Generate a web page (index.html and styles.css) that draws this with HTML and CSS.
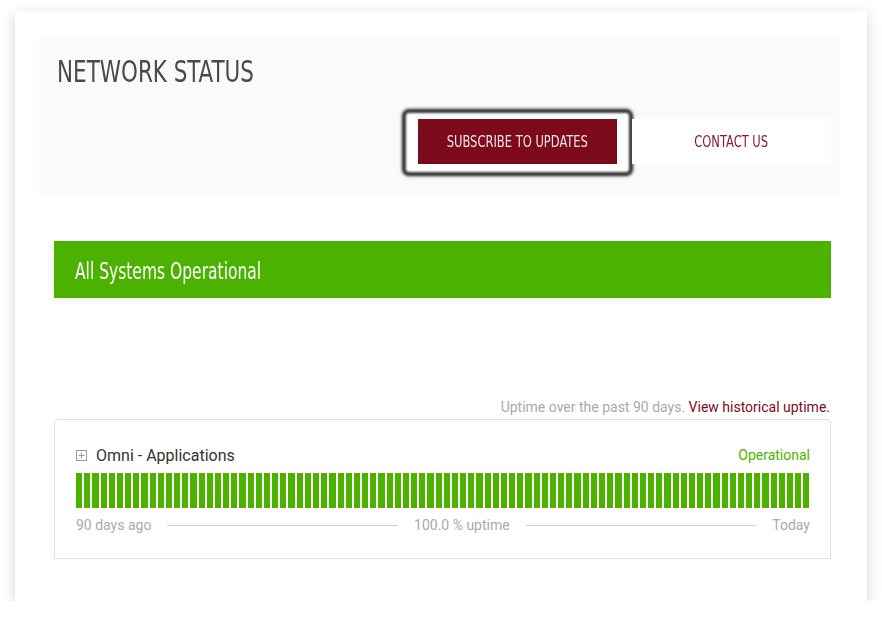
FILE: index.html
```html
<!DOCTYPE html>
<html>
<head>
<meta charset="utf-8">
<link rel="stylesheet" href="styles.css">
</head>
<body>
<div class="page">
  <header class="header">
    <h1 class="title"><span class="cond">NETWORK STATUS</span></h1>
    <div class="actions">
      <a class="btn btn-primary"><span class="cond cond-c">SUBSCRIBE TO UPDATES</span></a>
      <a class="btn btn-secondary"><span class="cond cond-c">CONTACT US</span></a>
    </div>
  </header>
  <main class="content">
    <div class="banner"><span class="cond">All Systems Operational</span></div>
    <div class="uptime-note">Uptime over the past 90 days. <a class="link">View historical uptime.</a></div>
    <div class="component">
      <div class="comp-head">
        <span class="comp-name">
          <svg class="plus" width="11" height="11" viewBox="0 0 11 11"><rect x="0.5" y="0.5" width="10" height="10" fill="none" stroke="#9a9a9a" stroke-width="1"/><path d="M5.5 2.5v6M2.5 5.5h6" stroke="#9a9a9a" stroke-width="1"/></svg>
          Omni - Applications
        </span>
        <span class="comp-status">Operational</span>
      </div>
      <div class="bars" id="bars"></div>
      <div class="legend">
        <span>90 days ago</span>
        <span class="rule"></span>
        <span>100.0 % uptime</span>
        <span class="rule"></span>
        <span>Today</span>
      </div>
    </div>
  </main>
</div>
<script>
  var b = document.getElementById('bars');
  for (var i = 0; i < 90; i++) { var d = document.createElement('span'); d.className = 'bar'; b.appendChild(d); }
</script>
</body>
</html>
```

FILE: styles.css
```css
* { box-sizing: border-box; }
html, body { margin: 0; padding: 0; background: #fff; }
body { font-family: Roboto, "Liberation Sans", Arial, sans-serif; }

.page {
  margin: 11px 0 0 15px;
  width: 852px;
  height: 590px;
  background: #fff;
  box-shadow: 0 4px 14px rgba(0,0,0,0.17);
  padding: 24px 0 0 24px;
  overflow: hidden;
}

.cond {
  display: inline-block;
  font-family: "DejaVu Sans Condensed", "DejaVu Sans", sans-serif;
  font-stretch: condensed;
  transform-origin: left center;
  white-space: nowrap;
}
.cond-c { transform-origin: center center; }

.header {
  width: 801px;
  height: 160px;
  background: #fafafa;
  padding: 18px 9px 0 18px;
  isolation: isolate;
}
.title {
  margin: 0;
  font-weight: 400;
  font-size: 31px;
  line-height: 36px;
  color: #4a4a4a;
}
.title .cond { transform: scaleX(0.77); }

.actions {
  display: flex;
  justify-content: flex-end;
  gap: 15px;
  margin-top: 29px;
}
.btn {
  display: flex;
  align-items: center;
  justify-content: center;
  width: 199px;
  height: 45px;
  font-size: 16px;
}
.btn .cond { transform: scaleX(0.8); }
.btn-primary {
  position: relative;
  background: #7c0a1a;
  color: #f3e6e8;
}
.btn-primary::before {
  content: "";
  position: absolute;
  top: -10px; bottom: -12px; left: -16px; right: -16px;
  z-index: -1;
  background: #fff;
  border: 4px solid #383838;
  border-radius: 7px;
  filter: blur(0.8px);
  box-shadow: 0 0 3px rgba(0,0,0,0.5);
}
.btn-secondary {
  background: #fff;
  color: #8a1a2b;
}

.content {
  padding: 46px 0 0 15px;
  width: 792px;
}
.banner {
  height: 57px;
  background: #4cb200;
  color: #fff;
  font-size: 23px;
  line-height: 53px;
  padding: 4px 0 0 21px;
}
.banner .cond { transform: scaleX(0.75); }

.uptime-note {
  margin-top: 100px;
  text-align: right;
  font-size: 14px;
  line-height: 18px;
  color: #aaa;
  padding-right: 1px;
}
.link { color: #7c0a1a; }

.component {
  margin-top: 3px;
  border: 1px solid #e0e0e0;
  border-radius: 4px 4px 0 0;
  padding: 25px 20px 24px 21px;
}
.comp-head {
  display: flex;
  justify-content: space-between;
  align-items: center;
  height: 20px;
}
.comp-name {
  display: flex;
  align-items: center;
  gap: 9px;
  font-size: 16px;
  color: #333;
}
.plus { display: block; }
.comp-status {
  font-size: 14px;
  color: #4cb200;
}
.bars {
  display: flex;
  gap: 2px;
  height: 35px;
  margin-top: 8px;
}
.bar {
  flex: 1;
  background: #4cb200;
}
.legend {
  display: flex;
  align-items: center;
  margin-top: 8px;
  height: 18px;
  font-size: 14px;
  color: #aaa;
}
.rule {
  flex: 1;
  height: 1px;
  background: #d0d0d0;
  margin: 0 16px;
}
```
